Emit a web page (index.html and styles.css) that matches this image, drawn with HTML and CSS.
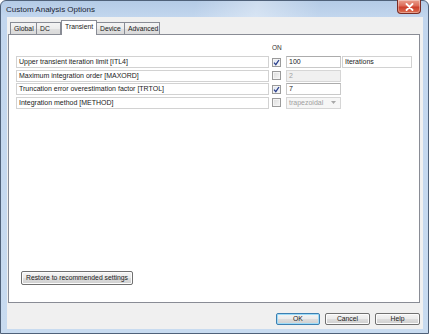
FILE: index.html
```html
<!DOCTYPE html>
<html>
<head>
<meta charset="utf-8">
<link rel="stylesheet" href="styles.css">
</head>
<body>
<div class="window">
  <div class="titlebar">
    <span class="title">Custom Analysis Options</span>
    <div class="close">
      <svg width="9" height="8" viewBox="0 0 9 8"><path d="M1.5 1 L7.5 7 M7.5 1 L1.5 7" stroke="#fff" stroke-width="1.8" stroke-linecap="round"/></svg>
    </div>
  </div>
  <div class="client">
    <div class="tabs">
      <div class="tab t-global">Global</div>
      <div class="tab t-dc">DC</div>
      <div class="tab t-transient active">Transient</div>
      <div class="tab t-device">Device</div>
      <div class="tab t-advanced">Advanced</div>
    </div>
    <div class="panel">
      <div class="head"><span class="on">ON</span></div>
      <div class="rows">
        <div class="row">
          <div class="label">Upper transient iteration limit [ITL4]</div>
          <span class="cb checked"><svg width="7" height="7" viewBox="0 0 7 7"><path d="M1 3.6 L2.8 5.6 L6 1" fill="none" stroke="#2a3f8c" stroke-width="1.3"/></svg></span>
          <div class="field">100</div>
          <div class="unit">Iterations</div>
        </div>
        <div class="row">
          <div class="label">Maximum integration order [MAXORD]</div>
          <span class="cb"></span>
          <div class="field disabled">2</div>
        </div>
        <div class="row">
          <div class="label">Truncation error overestimation factor [TRTOL]</div>
          <span class="cb checked"><svg width="7" height="7" viewBox="0 0 7 7"><path d="M1 3.6 L2.8 5.6 L6 1" fill="none" stroke="#2a3f8c" stroke-width="1.3"/></svg></span>
          <div class="field">7</div>
        </div>
        <div class="row">
          <div class="label">Integration method [METHOD]</div>
          <span class="cb"></span>
          <div class="field disabled select"><span>trapezoidal</span><svg width="5" height="3" viewBox="0 0 5 3"><path d="M0 0 L5 0 L2.5 3 Z" fill="#a8a8a8"/></svg></div>
        </div>
      </div>
      <button class="btn restore">Restore to recommended settings</button>
    </div>
    <div class="buttons">
      <button class="btn default">OK</button>
      <button class="btn">Cancel</button>
      <button class="btn">Help</button>
    </div>
  </div>
</div>
</body>
</html>
```
FILE: styles.css
```css
* { box-sizing: border-box; }
html, body { margin: 0; padding: 0; }
body {
  width: 429px;
  height: 334px;
  overflow: hidden;
  font-family: "Liberation Sans", Arial, sans-serif;
  font-size: 7px;
  color: #1a1a1a;
  background: #fff;
}
.window {
  width: 429px;
  height: 334px;
  border: 1px solid #4f6179;
  border-radius: 6px 6px 0 0;
  background: linear-gradient(180deg, #b4cbe6 0px, #c2d6ee 16px, #c8dbf0 100%);
  padding: 0 5px 4px 6px;
  display: flex;
  flex-direction: column;
}
.titlebar {
  height: 16px;
  display: flex;
  align-items: flex-start;
  position: relative;
  background: linear-gradient(100deg, rgba(255,255,255,0) 0%, rgba(255,255,255,0) 45%, rgba(255,255,255,0.35) 60%, rgba(255,255,255,0) 75%);
}
.title {
  font-family: "Liberation Sans", Arial, sans-serif;
  font-size: 8px;
  color: #1b2533;
  margin-left: -1px;
  margin-top: 3.5px;
}
.close {
  position: absolute;
  right: 2px;
  top: -1px;
  width: 24px;
  height: 14px;
  border: 1px solid #7a2c24;
  border-top: none;
  border-radius: 0 0 4px 4px;
  background: linear-gradient(180deg, #eaa08e 0%, #dc6b58 45%, #cc3f2c 55%, #dc7052 100%);
  display: flex;
  align-items: center;
  justify-content: center;
  box-shadow: inset 0 0 0 1px rgba(255,255,255,0.35);
}
.client {
  flex: 1;
  background: #f0f0f0;
  padding: 3px 3px 0 1px;
  display: flex;
  flex-direction: column;
}
.tabs {
  height: 14px;
  display: flex;
  align-items: flex-end;
  padding-left: 2px;
  position: relative;
  z-index: 1;
}
.tab {
  height: 12px;
  border: 1px solid #898c95;
  border-bottom: none;
  border-right: none;
  background: linear-gradient(180deg, #f4f4f4 0%, #ececec 50%, #e0e0e0 51%, #dadada 100%);
  font-size: 6.8px;
  padding: 2px 0 0 3px;
  line-height: 8px;
  color: #1a1a1a;
}
.t-global { width: 26px; }
.t-dc { width: 25px; border-right: 1px solid #898c95; }
.t-transient {
  width: 36px;
  height: 15px;
  margin-bottom: -1px;
  background: #fff;
  border-right: 1px solid #898c95;
  padding-top: 2px;
  padding-left: 3px;
}
.t-device { width: 27px; border-left: none; }
.t-advanced { width: 36px; border-right: 1px solid #898c95; }
.panel {
  height: 269px;
  border: 1px solid #898c95;
  background: #fff;
  padding: 0 0 17px 7px;
  display: flex;
  flex-direction: column;
}
.head {
  height: 21px;
  display: flex;
  align-items: flex-end;
  padding-left: 256px;
  padding-bottom: 5px;
}
.on { font-size: 6.5px; color: #333; line-height: 7px; }
.rows { display: flex; flex-direction: column; gap: 1.5px; }
.row { display: flex; align-items: center; height: 12px; }
.label {
  width: 253px;
  height: 12px;
  border: 1px solid #d2d2d2;
  padding-left: 2px;
  line-height: 10px;
  font-size: 7px;
  color: #222;
  white-space: nowrap;
}
.cb {
  width: 9px;
  height: 9px;
  margin-left: 3px;
  border: 1px solid #9a9a9a;
  background: linear-gradient(135deg, #dcdcdc 0%, #f6f6f6 100%);
  box-shadow: inset 0 0 0 1px #f4f4f4;
  display: flex;
  align-items: center;
  justify-content: center;
}
.cb.checked { background: linear-gradient(135deg, #dde3ee 0%, #f7f9fc 100%); }
.field {
  width: 55px;
  height: 12px;
  margin-left: 5px;
  border: 1px solid #c9c9c9;
  border-top-color: #acacac;
  padding-left: 2px;
  line-height: 10px;
  font-size: 7px;
  background: #fff;
  color: #222;
}
.field.disabled { background: #f0f0f0; color: #a0a0a0; border-color: #d6d6d6; }
.field.select {
  background: #f6f6f6;
  display: flex;
  align-items: center;
  justify-content: space-between;
  padding-right: 4px;
}
.unit {
  width: 70px;
  height: 12px;
  margin-left: 1px;
  border: 1px solid #d2d2d2;
  padding-left: 2px;
  line-height: 10px;
  font-size: 7px;
  color: #222;
}
.btn {
  font-family: "Liberation Sans", Arial, sans-serif;
  font-size: 6.8px;
  color: #1a1a1a;
  border: 1px solid #707070;
  border-radius: 2px;
  background: linear-gradient(180deg, #f4f4f4 0%, #ebebeb 48%, #dddddd 52%, #cfcfcf 100%);
  box-shadow: inset 0 0 0 1px #fcfcfc;
  padding: 0;
  margin: 0;
  line-height: 10px;
}
.restore {
  margin-top: auto;
  margin-left: 5px;
  width: 112px;
  height: 14px;
}
.buttons {
  display: flex;
  justify-content: flex-end;
  gap: 5px;
  margin-top: 10px;
}
.buttons .btn { width: 45px; height: 12px; }
.buttons .default {
  width: 44px;
  border-color: #3c7fb1;
  box-shadow: inset 0 0 0 1px #9fdcf8;
}
```
